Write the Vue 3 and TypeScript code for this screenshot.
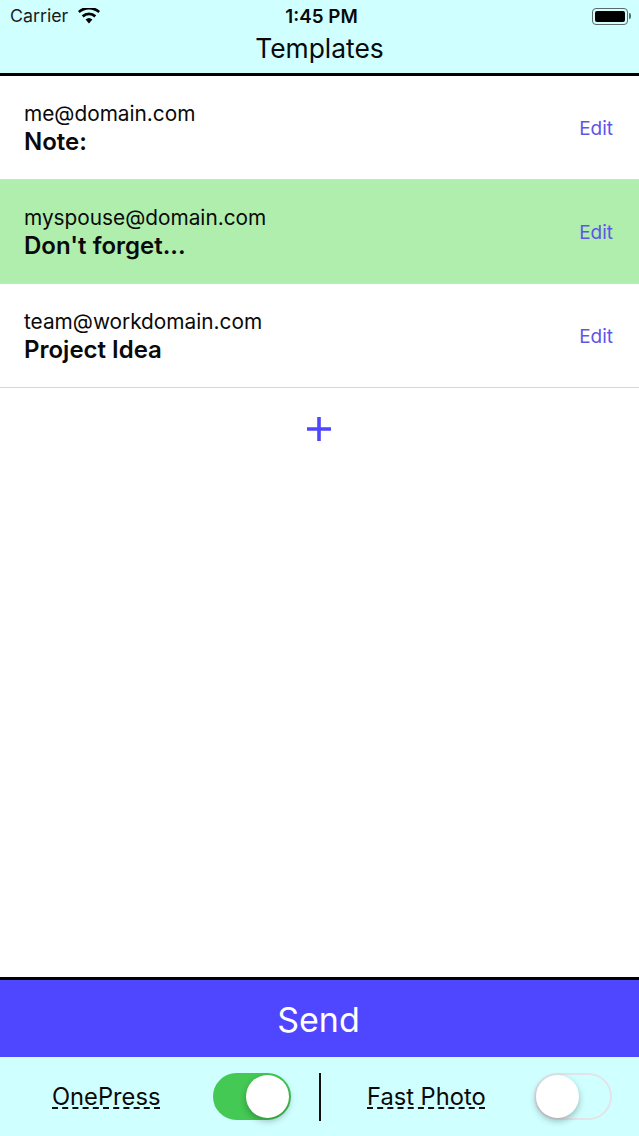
<script setup lang="ts">
interface Template {
  email: string
  title: string
  selected?: boolean
}

const templates: Template[] = [
  { email: 'me@domain.com', title: 'Note:' },
  { email: 'myspouse@domain.com', title: "Don't forget...", selected: true },
  { email: 'team@workdomain.com', title: 'Project Idea' },
]
</script>

<template>
  <div class="screen">
    <header class="top">
      <div class="status">
        <div class="status-left">
          <span class="carrier">Carrier</span>
          <svg class="wifi" width="22" height="16" viewBox="0 0 22 16">
            <path d="M11 15.5 7.6 11.6a5 5 0 0 1 6.8 0Z" fill="#000" />
            <path d="M5.6 9.4a8 8 0 0 1 10.8 0l1.8-2.1a11 11 0 0 0-14.4 0Z" fill="#000" />
            <path d="M1.7 5a14 14 0 0 1 18.6 0L22 3A16.5 16.5 0 0 0 0 3Z" fill="#000" />
          </svg>
        </div>
        <span class="time">1:45 PM</span>
        <div class="battery">
          <span class="battery-body"><span class="battery-fill"></span></span>
          <span class="battery-cap"></span>
        </div>
      </div>
      <h1 class="title">Templates</h1>
    </header>

    <main class="list">
      <div
        v-for="item in templates"
        :key="item.email"
        class="row"
        :class="{ 'row--selected': item.selected }"
      >
        <div class="row-text">
          <div class="email">{{ item.email }}</div>
          <div class="subject">{{ item.title }}</div>
        </div>
        <span class="edit">Edit</span>
      </div>
      <div class="add">
        <svg width="26" height="26" viewBox="0 0 26 26">
          <path d="M13 1v24M1 13h24" stroke="#4f47ff" stroke-width="3.6" fill="none" />
        </svg>
      </div>
    </main>

    <button class="send">Send</button>

    <footer class="options">
      <div class="option option--left">
        <span class="option-label">OnePress</span>
        <span class="toggle toggle--on"><span class="knob"></span></span>
      </div>
      <span class="divider"></span>
      <div class="option option--right">
        <span class="option-label">Fast Photo</span>
        <span class="toggle"><span class="knob"></span></span>
      </div>
    </footer>
  </div>
</template>

<style>
html,
body {
  margin: 0;
  background: #fff;
}
</style>

<style scoped>
.screen {
  width: 639px;
  height: 1136px;
  display: flex;
  flex-direction: column;
  overflow: hidden;
  font-family: Inter, "Liberation Sans", sans-serif;
  color: #0a0a0a;
  background: #fff;
}

.top {
  height: 73px;
  background: #d0ffff;
  border-bottom: 3px solid #000;
  flex-shrink: 0;
}

.status {
  height: 32px;
  display: grid;
  grid-template-columns: 1fr auto 1fr;
  align-items: center;
  padding: 0 8px 0 10px;
}

.status-left {
  display: flex;
  align-items: center;
  gap: 10px;
}

.carrier {
  font-size: 17.8px;
  line-height: 20px;
  color: #1a1a1a;
}

.time {
  font-size: 18.8px;
  font-weight: 600;
  margin-left: 2px;
}

.battery {
  justify-self: end;
  display: flex;
  align-items: center;
  gap: 1px;
}

.battery-body {
  width: 36px;
  height: 17px;
  box-sizing: border-box;
  border: 1px solid #5c6a6a;
  border-radius: 4px;
  padding: 2px;
  display: block;
}

.battery-fill {
  display: block;
  height: 100%;
  background: #000;
  border-radius: 2px;
}

.battery-cap {
  width: 2px;
  height: 6px;
  background: #5c6a6a;
  border-radius: 0 2px 2px 0;
}

.title {
  margin: 0;
  font-size: 26.4px;
  line-height: 32px;
  font-weight: 400;
  text-align: center;
}

.list {
  flex: 1;
  min-height: 0;
}

.row {
  height: 104px;
  box-sizing: border-box;
  display: flex;
  align-items: center;
  justify-content: space-between;
  padding: 1px 26px 0 24px;
  border-bottom: 1px solid #d6d6da;
}

.row--selected {
  background: #b0eeae;
}

.row-text {
  margin-top: -1px;
}

.email {
  font-size: 20.8px;
  line-height: 28px;
}

.subject {
  font-size: 24px;
  line-height: 28px;
  font-weight: 600;
}

.edit {
  font-size: 19px;
  color: #5f55e6;
}

.add {
  display: flex;
  justify-content: center;
  padding: 28px 2px 0 0;
}

.send {
  height: 80px;
  flex-shrink: 0;
  box-sizing: border-box;
  padding: 2px 2px 0 0;
  border: 0;
  border-top: 3px solid #000;
  background: #4f47ff;
  color: #fff;
  font-family: inherit;
  font-size: 34px;
}

.options {
  height: 79px;
  flex-shrink: 0;
  background: #d0ffff;
  display: flex;
  align-items: center;
}

.option {
  display: flex;
  align-items: center;
}

.option--left {
  width: 319px;
  padding-left: 52px;
  gap: 53px;
  box-sizing: border-box;
}

.option--right {
  padding-left: 46px;
  gap: 48px;
}

.divider {
  width: 2px;
  height: 48px;
  background: #111;
}

.option-label {
  font-size: 23.7px;
  line-height: 30px;
  text-decoration: underline dashed #111 1.5px;
  text-underline-offset: 3px;
}

.toggle {
  width: 78px;
  height: 47px;
  box-sizing: border-box;
  border: 2px solid #e2e4e8;
  border-radius: 24px;
  display: flex;
  align-items: center;
  justify-content: flex-start;
}

.toggle--on {
  background: #44c955;
  border-color: #44c955;
  justify-content: flex-end;
}

.knob {
  width: 43px;
  height: 43px;
  border-radius: 50%;
  background: #fff;
  box-shadow: 0 3px 7px rgba(0, 0, 0, 0.28);
}
</style>
